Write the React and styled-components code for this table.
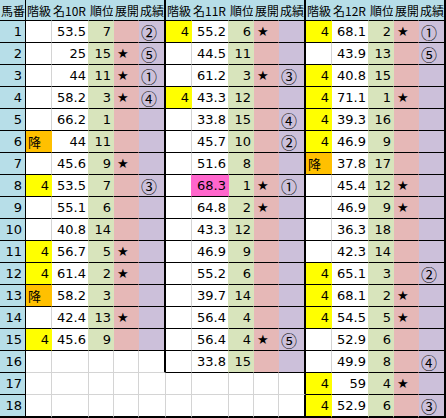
import styled, { createGlobalStyle } from "styled-components";

const C = {
  blue: "#b7dee8",
  yellow: "#ffff00",
  orange: "#ffc000",
  green: "#d8e4bc",
  pink: "#e6b8b7",
  purple: "#ccc0da",
  hot: "#ff66cc",
  grid: "#d4d4d4",
  line: "#000",
};

// [階級, 名, 順位, 展開, 成績]
const races = [
  {
    name: "名10R",
    rows: [
      ["", "53.5", "7", "", "②"],
      ["", "25", "15", "★", "⑤"],
      ["", "44", "11", "★", "①"],
      ["", "58.2", "3", "★", "④"],
      ["", "66.2", "1", "", ""],
      ["降", "44", "11", "", ""],
      ["", "45.6", "9", "★", ""],
      ["4", "53.5", "7", "", "③"],
      ["", "55.1", "6", "", ""],
      ["", "40.8", "14", "", ""],
      ["4", "56.7", "5", "★", ""],
      ["4", "61.4", "2", "★", ""],
      ["降", "58.2", "3", "", ""],
      ["", "42.4", "13", "★", ""],
      ["4", "45.6", "9", "", ""],
    ],
  },
  {
    name: "名11R",
    hot: 7,
    rows: [
      ["4", "55.2", "6", "★", ""],
      ["", "44.5", "11", "", ""],
      ["", "61.2", "3", "★", "③"],
      ["4", "43.3", "12", "", ""],
      ["", "33.8", "15", "", "④"],
      ["", "45.7", "10", "", "②"],
      ["", "51.6", "8", "", ""],
      ["", "68.3", "1", "★", "①"],
      ["", "64.8", "2", "★", ""],
      ["", "43.3", "12", "", ""],
      ["", "46.9", "9", "", ""],
      ["", "55.2", "6", "", ""],
      ["", "39.7", "14", "", ""],
      ["", "56.4", "4", "", ""],
      ["", "56.4", "4", "★", "⑤"],
      ["", "33.8", "15", "", ""],
    ],
  },
  {
    name: "名12R",
    rows: [
      ["4", "68.1", "2", "★", "①"],
      ["", "43.9", "13", "", "⑤"],
      ["4", "40.8", "15", "", ""],
      ["4", "71.1", "1", "★", ""],
      ["4", "39.3", "16", "", ""],
      ["4", "46.9", "9", "", ""],
      ["降", "37.8", "17", "", ""],
      ["", "45.4", "12", "★", ""],
      ["", "46.9", "9", "★", ""],
      ["", "36.3", "18", "", ""],
      ["", "42.3", "14", "", ""],
      ["4", "65.1", "3", "", "②"],
      ["4", "68.1", "2", "★", ""],
      ["4", "54.5", "5", "★", ""],
      ["", "52.9", "6", "", ""],
      ["", "49.9", "8", "", "④"],
      ["4", "59", "4", "★", ""],
      ["4", "52.9", "6", "", "③"],
    ],
  },
];

const ROWS = 18;
const heads = ["階級", null, "順位", "展開", "成績"];

const GlobalStyle = createGlobalStyle`
  body {
    margin: 0;
    background: #fff;
  }
`;

const Sheet = styled.div`
  display: grid;
  grid-template-columns: 26px repeat(3, 26px 37px 25px 25px 27px);
  grid-template-rows: 21px repeat(17, 22px) 23px;
  width: 446px;
  color: #000;
`;

const Cell = styled.div`
  box-sizing: border-box;
  display: flex;
  align-items: center;
  overflow: hidden;
  white-space: nowrap;
  background: ${(p) => p.$bg || "#fff"};
  border-right: ${(p) => p.$rw || 1}px solid ${(p) => p.$rc || C.grid};
  border-bottom: ${(p) => p.$bw || 1}px solid ${(p) => p.$bc || C.grid};
  font-family: "DejaVu Sans", sans-serif;
  font-size: 13px;
`;

const HeadCell = styled(Cell)`
  background: ${C.blue};
  padding-left: 1px;
  padding-top: 1px;
  font-family: "Noto Sans CJK JP", sans-serif;
  font-size: 12px;
`;

const RowNo = styled(Cell)`
  background: ${C.blue};
  justify-content: flex-end;
  padding-right: 3px;
`;

const NumCell = styled(Cell)`
  justify-content: ${(p) => (p.$left ? "flex-start" : "flex-end")};
  padding: 0 2px;
  font-family: ${(p) =>
    p.$left ? '"Noto Sans CJK JP", sans-serif' : '"DejaVu Sans", sans-serif'};
`;

const MarkCell = styled(Cell)`
  padding-left: 3px;
  font-size: 13px;
`;

const ResultCell = styled(Cell)`
  padding-left: 2px;
  font-family: "Noto Sans CJK JP", sans-serif;
  font-size: 16px;
`;

function cellsFor(race, b, r) {
  const inside = r < race.rows.length;
  const row = inside ? race.rows[r] : ["", "", "", "", ""];
  const next = races[b + 1];
  const edgeBlack = inside || b === 2 || (next && r < next.rows.length);
  const last = r === ROWS - 1;
  const bc = last || inside ? C.line : C.grid;
  const bw = last ? 2 : 1;

  const bgs = inside
    ? [
        row[0] === "4" ? C.yellow : row[0] === "降" ? C.orange : null,
        race.hot === r ? C.hot : null,
        C.green,
        C.pink,
        C.purple,
      ]
    : [null, null, null, null, null];

  const rc = (c) => bgs[c] || bgs[c + 1] || C.grid;

  return [
    <NumCell
      key="k"
      $bg={bgs[0]}
      $rc={rc(0)}
      $bc={bc}
      $bw={bw}
      $left={row[0] === "降"}
    >
      {row[0]}
    </NumCell>,
    <NumCell key="m" $bg={bgs[1]} $rc={rc(1)} $bc={bc} $bw={bw}>
      {row[1]}
    </NumCell>,
    <NumCell key="j" $bg={bgs[2]} $rc={rc(2)} $bc={bc} $bw={bw}>
      {row[2]}
    </NumCell>,
    <MarkCell key="t" $bg={bgs[3]} $rc={rc(3)} $bc={bc} $bw={bw}>
      {row[3]}
    </MarkCell>,
    <ResultCell
      key="s"
      $bg={bgs[4]}
      $rc={edgeBlack ? C.line : C.grid}
      $rw={edgeBlack ? 2 : 1}
      $bc={bc}
      $bw={bw}
    >
      {row[4]}
    </ResultCell>,
  ];
}

export default function App() {
  return (
    <>
      <GlobalStyle />
      <Sheet>
        <HeadCell $rc={C.line} $bc={C.line}>
          馬番
        </HeadCell>
        {races.map((race) =>
          heads.map((h, c) => (
            <HeadCell
              key={race.name + c}
              $rc={c === 4 ? C.line : C.blue}
              $rw={c === 4 ? 2 : 1}
              $bc={C.line}
            >
              {h || race.name}
            </HeadCell>
          ))
        )}
        {Array.from({ length: ROWS }, (_, r) => [
          <RowNo
            key={"n" + r}
            $rc={C.line}
            $bc={C.line}
            $bw={r === ROWS - 1 ? 2 : 1}
          >
            {r + 1}
          </RowNo>,
          ...races.map((race, b) => (
            <div key={b + "-" + r} style={{ display: "contents" }}>
              {cellsFor(race, b, r)}
            </div>
          )),
        ])}
      </Sheet>
    </>
  );
}
